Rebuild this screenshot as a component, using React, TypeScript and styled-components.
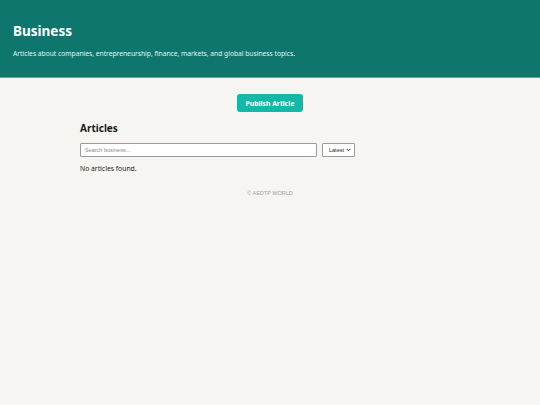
import React from "react";
import styled, { createGlobalStyle } from "styled-components";

const Global = createGlobalStyle`
  html, body { margin: 0; padding: 0; }
  body {
    background: #f7f5f1;
    font-family: "Noto Sans", "Open Sans", sans-serif;
    color: #1a1a1a;
    min-height: 405px;
  }
`;

const Header = styled.header`
  background: #0f766e;
  color: #fff;
  padding: 20px 13px 17px;
  border-bottom: 1px solid #5aa59d;
`;

const Title = styled.h1`
  margin: 0;
  font-size: 13.5px;
  font-weight: 700;
  line-height: 22px;
`;

const Subtitle = styled.p`
  margin: 6px 0 0;
  font-size: 6.7px;
  line-height: 12px;
  color: #e6f3f1;
`;

const Main = styled.main`
  width: 380px;
  margin: 0 auto;
  padding-top: 16px;
  display: flex;
  flex-direction: column;
`;

const Actions = styled.div`
  display: flex;
  justify-content: center;
`;

const PublishButton = styled.button`
  background: #14b8a6;
  color: #fff;
  border: none;
  border-radius: 3px;
  font-family: "Noto Sans", sans-serif;
  font-weight: 700;
  font-size: 6.8px;
  height: 18px;
  padding: 0 9px;
  cursor: pointer;
`;

const SectionTitle = styled.h2`
  margin: 9px 0 0;
  font-size: 10px;
  line-height: 14px;
  font-weight: 700;
`;

const Controls = styled.div`
  display: flex;
  gap: 5px;
  margin-top: 8px;
  align-items: center;
`;

const SearchInput = styled.input`
  display: block;
  width: 237px;
  height: 14px;
  box-sizing: border-box;
  border: 1px solid #9a9a9a;
  border-radius: 1px;
  background: #fff;
  font-family: "Liberation Sans", Arial, sans-serif;
  font-size: 5.5px;
  padding: 0 4px;
  &::placeholder { color: #8a8a8a; }
`;

const SelectWrap = styled.div`
  position: relative;
  width: 33px;
  height: 14px;
`;

const SortSelect = styled.select`
  display: block;
  appearance: none;
  -webkit-appearance: none;
  height: 14px;
  width: 33px;
  box-sizing: border-box;
  border: 1px solid #9a9a9a;
  border-radius: 1px;
  background: #fff;
  color: #222;
  font-family: "Liberation Sans", Arial, sans-serif;
  font-size: 5.5px;
  padding: 0 0 0 6px;
  margin: 0;
  outline: none;
`;

const Chevron = styled.svg`
  position: absolute;
  right: 4px;
  top: 5px;
  width: 5px;
  height: 4px;
  pointer-events: none;
`;

const Empty = styled.p`
  margin: 7px 0 0;
  font-size: 6.8px;
  line-height: 10px;
`;

const Footer = styled.footer`
  text-align: center;
  margin-top: 16px;
  font-family: "Liberation Sans", Arial, sans-serif;
  font-size: 5.5px;
  color: #a0a0a0;
`;

export default function App() {
  return (
    <>
      <Global />
      <Header>
        <Title>Business</Title>
        <Subtitle>
          Articles about companies, entrepreneurship, finance, markets, and global business topics.
        </Subtitle>
      </Header>
      <Main>
        <Actions>
          <PublishButton>Publish Article</PublishButton>
        </Actions>
        <SectionTitle>Articles</SectionTitle>
        <Controls>
          <SearchInput placeholder="Search business..." />
          <SelectWrap>
            <SortSelect defaultValue="latest">
              <option value="latest">Latest</option>
              <option value="oldest">Oldest</option>
            </SortSelect>
            <Chevron viewBox="0 0 10 8">
              <path d="M1.5 2 L5 5.5 L8.5 2" fill="none" stroke="#333" strokeWidth="2" />
            </Chevron>
          </SelectWrap>
        </Controls>
        <Empty>No articles found.</Empty>
        <Footer>© AEDTP WORLD</Footer>
      </Main>
    </>
  );
}
